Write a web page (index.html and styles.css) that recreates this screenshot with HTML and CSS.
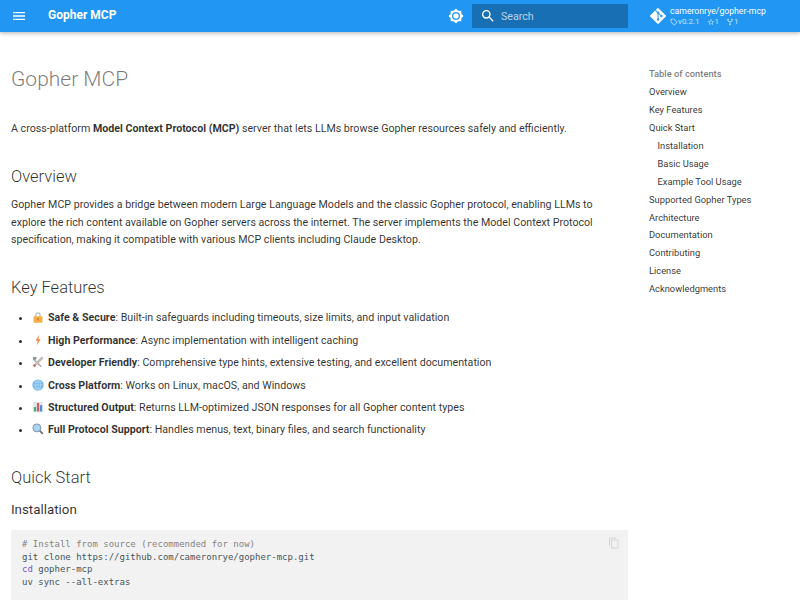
FILE: index.html
```html
<!DOCTYPE html>
<html lang="en">
<head>
<meta charset="utf-8">
<title>Gopher MCP</title>
<link rel="stylesheet" href="styles.css">
</head>
<body>
<header class="header">
  <svg class="menu-icon" viewBox="0 0 24 24"><path d="M3 6h18v2H3V6m0 5h18v2H3v-2m0 5h18v2H3v-2Z"/></svg>
  <div class="site-title">Gopher MCP</div>
  <svg class="theme-icon" viewBox="0 0 24 24"><path d="M12 8a4 4 0 0 0-4 4 4 4 0 0 0 4 4 4 4 0 0 0 4-4 4 4 0 0 0-4-4m0 10a6 6 0 0 1-6-6 6 6 0 0 1 6-6 6 6 0 0 1 6 6 6 6 0 0 1-6 6m8-9.31V4h-4.69L12 .69 8.69 4H4v4.69L.69 12 4 15.31V20h4.69L12 23.31 15.31 20H20v-4.69L23.31 12 20 8.69Z"/></svg>
  <div class="search">
    <svg class="search-icon" viewBox="0 0 24 24"><path d="M9.5 3A6.5 6.5 0 0 1 16 9.5c0 1.61-.59 3.09-1.56 4.23l.27.27h.79l5 5-1.5 1.5-5-5v-.79l-.27-.27A6.516 6.516 0 0 1 9.5 16 6.5 6.5 0 0 1 3 9.5 6.5 6.5 0 0 1 9.5 3m0 2C7 5 5 7 5 9.5S7 14 9.5 14 14 12 14 9.5 12 5 9.5 5Z"/></svg>
    <span class="search-label">Search</span>
  </div>
  <div class="repo">
    <svg class="git-icon" viewBox="0 0 448 512"><path d="M439.55 236.05 244 40.45a28.87 28.87 0 0 0-40.81 0l-40.66 40.63 51.52 51.52c27.06-9.14 52.68 16.77 43.39 43.68l49.66 49.66c34.23-11.8 61.18 31 35.47 56.69-26.49 26.49-70.21-2.87-56-37.34L240.22 199v121.85c25.3 12.54 22.26 41.85 9.08 55a34.34 34.34 0 0 1-48.55 0c-17.57-17.6-11.07-46.91 11.25-56v-123c-20.8-8.51-24.6-30.74-18.64-45L142.57 101 8.45 235.14a28.86 28.86 0 0 0 0 40.81l195.61 195.6a28.86 28.86 0 0 0 40.8 0l194.69-194.69a28.86 28.86 0 0 0 0-40.81Z"/></svg>
    <div class="repo-text">
      <div class="repo-name">cameronrye/gopher-mcp</div>
      <div class="repo-facts">
        <span class="fact"><svg viewBox="0 0 24 24"><path d="M5.5 7A1.5 1.5 0 0 1 4 5.5 1.5 1.5 0 0 1 5.5 4 1.5 1.5 0 0 1 7 5.5 1.5 1.5 0 0 1 5.5 7m15.91 4.58-9-9C12.05 2.22 11.55 2 11 2H4c-1.11 0-2 .89-2 2v7c0 .55.22 1.05.59 1.41l9 9c.36.36.86.59 1.41.59.55 0 1.05-.23 1.41-.59l7-7c.37-.36.59-.86.59-1.41 0-.56-.23-1.06-.59-1.42M13 20l-9-9V4h7l9 9-7 7Z"/></svg>v0.2.1</span>
        <span class="fact"><svg viewBox="0 0 24 24"><path d="M12 15.39 8.24 17.66l.99-4.28-3.32-2.88 4.38-.37L12 6.09l1.71 4.04 4.38.37-3.32 2.88.99 4.28M22 9.24l-7.19-.61L12 2 9.19 8.63 2 9.24l5.45 4.73L5.82 21 12 17.27 18.18 21l-1.64-7.03L22 9.24Z"/></svg>1</span>
        <span class="fact"><svg viewBox="0 0 24 24"><path d="M6 2a3 3 0 0 1 3 3c0 1.28-.81 2.38-1.94 2.81.09.46.33.87.69 1.19.66.6 1.65 1 2.75 1h3c1.1 0 2.09-.4 2.75-1 .36-.32.6-.73.69-1.19A3.01 3.01 0 0 1 15 5a3 3 0 0 1 3-3 3 3 0 0 1 3 3c0 1.32-.86 2.44-2.04 2.84-.11.95-.58 1.83-1.32 2.49-.99.9-2.2 1.67-3.64 1.67h-1v4.17A3.01 3.01 0 0 1 15 19a3 3 0 0 1-3 3 3 3 0 0 1-3-3c0-1.31.84-2.42 2-2.83V12h-1c-1.44 0-2.65-.77-3.64-1.67-.74-.66-1.21-1.54-1.32-2.49A3.01 3.01 0 0 1 3 5a3 3 0 0 1 3-3m0 2a1 1 0 1 0 0 2 1 1 0 0 0 0-2m12 0a1 1 0 1 0 0 2 1 1 0 0 0 0-2m-6 14a1 1 0 1 0 0 2 1 1 0 0 0 0-2Z"/></svg>1</span>
      </div>
    </div>
  </div>
</header>
<div class="page">
  <main class="content">
    <h1>Gopher MCP</h1>
    <p class="lead">A cross-platform <strong>Model Context Protocol (MCP)</strong> server that lets LLMs browse Gopher resources safely and efficiently.</p>
    <h2>Overview</h2>
    <p>Gopher MCP provides a bridge between modern Large Language Models and the classic Gopher protocol, enabling LLMs to explore the rich content available on Gopher servers across the internet. The server implements the Model Context Protocol specification, making it compatible with various MCP clients including Claude Desktop.</p>
    <h2>Key Features</h2>
    <ul class="features">
      <li><svg class="emoji" viewBox="0 0 16 16"><path d="M4.5 8V5a3.5 3.5 0 0 1 7 0v3H10V5a2 2 0 0 0-4 0v3Z" fill="#b0b6ba"/><rect x="2" y="7" width="12" height="8.5" rx="1.2" fill="#f5b04a"/><rect x="7.2" y="9.5" width="1.6" height="3" fill="#a8742a"/></svg><strong>Safe &amp; Secure</strong>: Built-in safeguards including timeouts, size limits, and input validation</li>
      <li><svg class="emoji" viewBox="0 0 16 16"><path d="M9.5 1 4.5 9h3L6.5 15l5-8h-3Z" fill="#f58a4b"/></svg><strong>High Performance</strong>: Async implementation with intelligent caching</li>
      <li><svg class="emoji" viewBox="0 0 16 16"><path d="M2.5 3 13 13.5l-1.5 1.5L1 4.5Z" fill="#a8aeb3"/><path d="M1 1.5 5 1l1.5 2-2.5 2.5L1.5 4Z" fill="#8d9499"/><path d="M11.5 2 2 11.5 4.5 14 14 4.5l1-3-1-.5Z" fill="#c9bcb4"/><path d="M1 12.5 3.5 15l2-2-2.5-2.5Z" fill="#c9705f"/></svg><strong>Developer Friendly</strong>: Comprehensive type hints, extensive testing, and excellent documentation</li>
      <li><svg class="emoji" viewBox="0 0 16 16"><circle cx="8" cy="8" r="7.5" fill="#6db5e8"/><path d="M1 8h14M8 1v14M3 4h10M3 12h10" stroke="#bfe0f5" stroke-width=".9" fill="none"/><ellipse cx="8" cy="8" rx="3.5" ry="7" stroke="#bfe0f5" stroke-width=".9" fill="none"/></svg><strong>Cross Platform</strong>: Works on Linux, macOS, and Windows</li>
      <li><svg class="emoji" viewBox="0 0 16 16"><rect x="1" y="1" width="14" height="14" fill="#e4e8ea"/><rect x="2.5" y="8" width="3" height="6" fill="#4caf72"/><rect x="6.5" y="2.5" width="3" height="11.5" fill="#e0566a"/><rect x="10.5" y="5.5" width="3" height="8.5" fill="#4a90d9"/></svg><strong>Structured Output</strong>: Returns LLM-optimized JSON responses for all Gopher content types</li>
      <li><svg class="emoji" viewBox="0 0 16 16"><path d="m9.5 9.5 5 5" stroke="#7a6a80" stroke-width="2.4" fill="none"/><circle cx="6.5" cy="6.5" r="5.3" fill="#a9d5f2" stroke="#7d93a8" stroke-width="1.3"/></svg><strong>Full Protocol Support</strong>: Handles menus, text, binary files, and search functionality</li>
    </ul>
    <h2>Quick Start</h2>
    <h3>Installation</h3>
    <div class="code-block">
      <svg class="copy-icon" viewBox="0 0 24 24"><path d="M19 21H8V7h11m0-2H8a2 2 0 0 0-2 2v14a2 2 0 0 0 2 2h11a2 2 0 0 0 2-2V7a2 2 0 0 0-2-2m-3-4H4a2 2 0 0 0-2 2v14h2V3h12V1Z"/></svg>
      <pre><code><span class="comment"># Install from source (recommended for now)</span>
git clone https://github.com/cameronrye/gopher-mcp.git
<span class="builtin">cd</span> gopher-mcp
uv sync --all-extras
</code></pre>
    </div>
  </main>
  <nav class="toc">
    <div class="toc-title">Table of contents</div>
    <ul class="toc-list">
      <li>Overview</li>
      <li>Key Features</li>
      <li>Quick Start</li>
      <li class="sub">Installation</li>
      <li class="sub">Basic Usage</li>
      <li class="sub">Example Tool Usage</li>
      <li>Supported Gopher Types</li>
      <li>Architecture</li>
      <li>Documentation</li>
      <li>Contributing</li>
      <li>License</li>
      <li>Acknowledgments</li>
    </ul>
  </nav>
</div>
</body>
</html>
```

FILE: styles.css
```css
html, body {
  margin: 0;
  height: 100%;
  overflow: hidden;
}
body {
  font-family: Roboto, "Liberation Sans", sans-serif;
  font-size: 10.67px;
  line-height: 17.6px;
  color: rgba(0, 0, 0, 0.82);
  background: #fff;
}
.header {
  display: flex;
  align-items: center;
  height: 32px;
  background: #2196f3;
  color: #fff;
  box-shadow: 0 0 3px rgba(0, 0, 0, 0.1), 0 2px 4px rgba(0, 0, 0, 0.2);
}
.header svg { fill: currentColor; }
.menu-icon { width: 16px; height: 16px; margin-left: 11px; }
.site-title {
  margin-left: 21px;
  font-size: 12px;
  font-weight: 700;
  flex: 1;
}
.theme-icon { width: 16px; height: 16px; margin-right: 8px; }
.search {
  display: flex;
  align-items: center;
  width: 156px;
  height: 24px;
  margin-right: 22px;
  border-radius: 1px;
  background: rgba(0, 0, 0, 0.26);
}
.search-icon { width: 16px; height: 16px; margin-left: 8px; }
.search-label { margin-left: 5px; padding-top: 1px; font-size: 10.67px; color: rgba(255, 255, 255, 0.7); }
.repo { display: flex; align-items: center; width: 150px; }
.git-icon { width: 16px; height: 18px; }
.repo-text { margin-left: 4px; }
.repo-name { font-size: 8.7px; line-height: 11px; }
.repo-facts { display: flex; gap: 7px; font-size: 8px; line-height: 10px; opacity: 0.75; }
.fact { display: flex; align-items: center; gap: 0; }
.fact svg { width: 8px; height: 8px; }
.page { display: flex; padding: 0 0 0 11px; }
.content { width: 617px; flex: none; }
h1, h2, h3, p, ul { margin: 0; }
h1 {
  margin-top: 33px;
  font-size: 21px;
  line-height: 28px;
  font-weight: 300;
  color: rgba(0, 0, 0, 0.54);
}
.lead { margin-top: 27px; }
h2 {
  margin-top: 28px;
  font-size: 16.5px;
  line-height: 22px;
  font-weight: 300;
}
h2 + p { margin-top: 8.5px; }
.features { margin-top: 10.5px; padding-left: 21px; }
.features li { margin-bottom: 4.8px; }
.emoji { width: 12px; height: 12px; vertical-align: -2px; margin-right: 4px; }
h3 {
  margin-top: 11.5px;
  font-size: 13.33px;
  line-height: 20px;
  font-weight: 400;
}
.code-block {
  position: relative;
  margin-top: 10px;
  background: #f2f2f2;
  border-radius: 1px;
}
.copy-icon {
  position: absolute;
  top: 7px;
  right: 8px;
  width: 12px;
  height: 12px;
  fill: rgba(0, 0, 0, 0.12);
}
pre { margin: 0; padding: 7.5px 11px 20px; line-height: 12.7px; }
code {
  font-family: "DejaVu Sans Mono", "Liberation Mono", monospace;
  font-size: 9px;
  color: #46555c;
}
.comment { color: rgba(0, 0, 0, 0.5); }
.builtin { color: #6e59d9; }
.toc {
  margin-left: 21px;
  padding-top: 34px;
  font-size: 9.33px;
  line-height: 12.5px;
}
.toc-title {
  margin-top: 2px;
  font-weight: 500;
  color: rgba(0, 0, 0, 0.54);
}
.toc-list { list-style: none; padding: 0; color: rgba(0, 0, 0, 0.82); }
.toc-list li { margin-top: 5.45px; }
.toc-list .sub { padding-left: 8.5px; }
```
